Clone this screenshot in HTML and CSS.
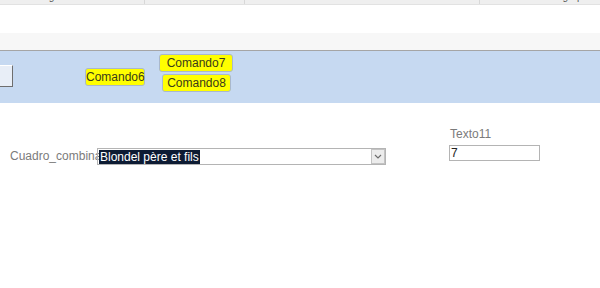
FILE: index.html
```html
<!DOCTYPE html>
<html lang="es">
<head>
    <meta charset="UTF-8">
    <title>Formulario</title>
    <link rel="stylesheet" href="styles.css">
</head>
<body>
    <div class="ribbon">
        <div class="ribbon-group g1">Registros</div>
        <div class="ribbon-group g2">Buscar</div>
        <div class="ribbon-group g3">Formato de texto</div>
        <div class="ribbon-group g4">&#9633; Nuevo grupo</div>
    </div>

    <div class="blank"></div>
    <div class="tabstrip"></div>

    <div class="form-header">
        <div class="nav-btn"></div>
        <button class="cmd cmd6">Comando6</button>
        <button class="cmd cmd7">Comando7</button>
        <button class="cmd cmd8">Comando8</button>
    </div>

    <div class="detail">
        <label class="lbl lbl-combo">Cuadro_combina</label>
        <div class="combo">
            <span class="combo-value">Blondel père et fils</span>
            <span class="combo-arrow">
                <svg viewBox="0 0 8 5"><path d="M1 1l3 3 3-3" fill="none" stroke="#6d6d6d" stroke-width="1.2"/></svg>
            </span>
        </div>
        <label class="lbl lbl-texto">Texto11</label>
        <div class="textbox">7</div>
    </div>
</body>
</html>
```

FILE: styles.css
```css
* {
    margin: 0;
    padding: 0;
    box-sizing: border-box;
}

body {
    font-family: "Liberation Sans", Arial, sans-serif;
    font-size: 12px;
    background: #fff;
    width: 600px;
    height: 288px;
    overflow: hidden;
}

.ribbon {
    height: 5px;
    background: #efefef;
    border-bottom: 1px solid #e2e2e2;
    display: flex;
    overflow: hidden;
}

.ribbon-group {
    font-size: 10px;
    line-height: 10px;
    color: #555;
    margin-top: -8px;
    text-align: center;
    border-right: 1px solid #d8d8d8;
}

.g1 { width: 145px; padding-right: 30px; }
.g2 { width: 100px; padding-left: 8px; }
.g3 { width: 235px; padding-left: 30px; }
.g4 { flex: 1; border-right: none; padding-left: 30px; }

.blank {
    height: 28px;
}

.tabstrip {
    height: 18px;
    background: #f7f7f7;
    border-bottom: 1px solid #a5a5a5;
}

.form-header {
    position: relative;
    height: 52px;
    background: #c6d9f1;
}

.nav-btn {
    position: absolute;
    left: -2px;
    top: 14px;
    width: 15px;
    height: 22px;
    background: #e8eef7;
    border: 1px solid #fff;
    border-right-color: #6e6e6e;
    border-bottom-color: #6e6e6e;
}

.cmd {
    position: absolute;
    height: 18px;
    background: #ffff00;
    border: 1px solid #a9b8cc;
    border-radius: 3px;
    font-family: "Liberation Sans", Arial, sans-serif;
    font-size: 12px;
    color: #3a3a1a;
    line-height: 15px;
    text-align: center;
}

.cmd6 { left: 85px; top: 17px; width: 60px; }
.cmd7 { left: 159px; top: 3px; width: 74px; }
.cmd8 { left: 162px; top: 23px; width: 69px; }

.detail {
    position: relative;
    height: 185px;
}

.lbl {
    position: absolute;
    color: #7b7b7b;
    font-size: 12px;
}

.lbl-combo { left: 10px; top: 46px; }
.lbl-texto { left: 450px; top: 24px; }

.combo {
    position: absolute;
    left: 97px;
    top: 45px;
    width: 289px;
    height: 17px;
    border: 1px solid #b4b4b4;
    display: flex;
    align-items: center;
}

.combo-value {
    background: #0d1b33;
    color: #fff;
    line-height: 14px;
    padding: 0 1px;
    margin-left: 1px;
}

.combo-arrow {
    margin-left: auto;
    width: 14px;
    height: 15px;
    border: 1px solid #c3c3c3;
    background: #ececec;
    display: flex;
    align-items: center;
    justify-content: center;
}

.combo-arrow svg {
    width: 8px;
    height: 5px;
}

.textbox {
    position: absolute;
    left: 449px;
    top: 42px;
    width: 91px;
    height: 16px;
    border: 1px solid #b4b4b4;
    color: #222;
    line-height: 14px;
    padding-left: 1px;
}
```
